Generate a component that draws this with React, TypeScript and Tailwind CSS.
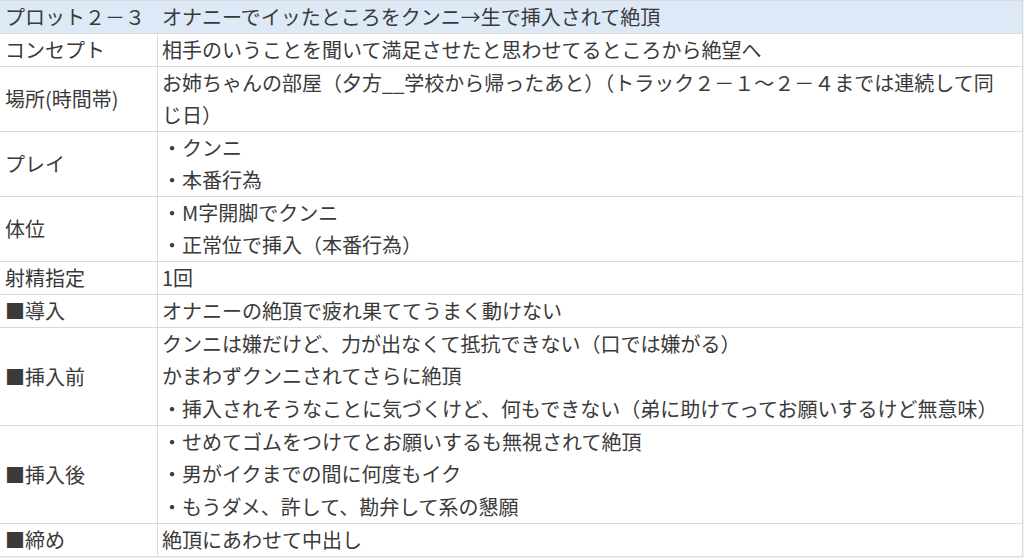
type Row = {
  label: string;
  lines: string[];
};

const rows: Row[] = [
  { label: 'コンセプト', lines: ['相手のいうことを聞いて満足させたと思わせてるところから絶望へ'] },
  {
    label: '場所(時間帯)',
    lines: ['お姉ちゃんの部屋（夕方__学校から帰ったあと）（トラック２－１～２－４までは連続して同', 'じ日）'],
  },
  { label: 'プレイ', lines: ['・クンニ', '・本番行為'] },
  { label: '体位', lines: ['・M字開脚でクンニ', '・正常位で挿入（本番行為）'] },
  { label: '射精指定', lines: ['1回'] },
  { label: '■導入', lines: ['オナニーの絶頂で疲れ果ててうまく動けない'] },
  {
    label: '■挿入前',
    lines: [
      'クンニは嫌だけど、力が出なくて抵抗できない（口では嫌がる）',
      'かまわずクンニされてさらに絶頂',
      '・挿入されそうなことに気づくけど、何もできない（弟に助けてってお願いするけど無意味）',
    ],
  },
  {
    label: '■挿入後',
    lines: [
      '・せめてゴムをつけてとお願いするも無視されて絶頂',
      '・男がイクまでの間に何度もイク',
      '・もうダメ、許して、勘弁して系の懇願',
    ],
  },
  { label: '■締め', lines: ['絶頂にあわせて中出し'] },
];

// 行数ごとの高さ（下罫線込み）
const heights: Record<number, string> = {
  1: 'h-[33px]',
  2: 'h-[65px]',
  3: 'h-[98px]',
};

export default function App() {
  return (
    <div
      className="w-[1024px] h-[558px] bg-[#eef2f7] text-[#3a3a3a] text-[20px] overflow-hidden"
      style={{ fontFamily: '"Noto Sans CJK JP", "Noto Sans", sans-serif' }}
    >
      <div className="w-[1023px] bg-white border-t border-r border-[#dadada]">
        {/* 見出し */}
        <div className="h-[33px] flex items-center pl-[5px] bg-[#dde9f6] border-b border-[#dadada] whitespace-nowrap">
          <span className="w-[157px] shrink-0">プロット２－３</span>
          <span>オナニーでイッたところをクンニ→生で挿入されて絶頂</span>
        </div>

        {rows.map((row) => (
          <div key={row.label} className={`flex border-b border-[#dadada] ${heights[row.lines.length]}`}>
            <div className="w-[158px] shrink-0 border-r border-[#dadada] pl-[5px] flex items-center whitespace-nowrap">
              {row.label}
            </div>
            <div className="flex-1 pl-[4px] flex flex-col">
              {row.lines.map((line, i) => (
                <div key={i} className="flex-1 flex items-center whitespace-nowrap">
                  {line}
                </div>
              ))}
            </div>
          </div>
        ))}
      </div>
    </div>
  );
}
